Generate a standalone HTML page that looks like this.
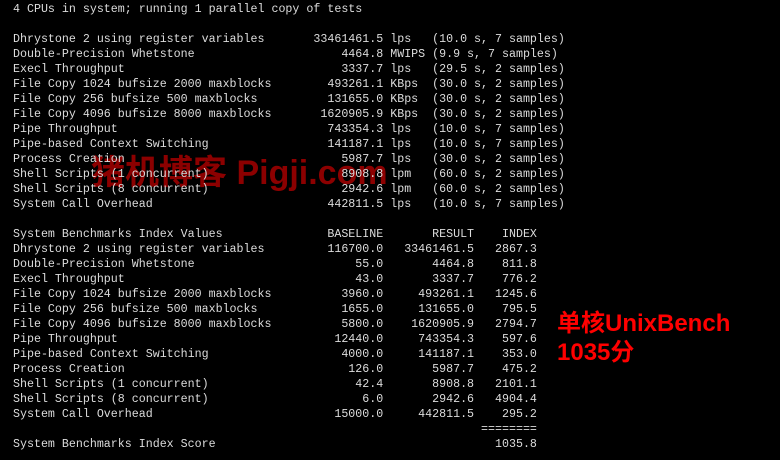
<!DOCTYPE html>
<html><head><meta charset="utf-8"><style>
html,body{margin:0;padding:0;background:#000;width:780px;height:460px;overflow:hidden;position:relative}
pre{position:absolute;left:13px;top:2px;margin:0;font-family:"Liberation Mono",monospace;font-size:11.65px;line-height:15px;color:#dcdcdc;z-index:2}
.wm{position:absolute;left:91px;top:153px;font-family:"Liberation Sans","Noto Sans CJK SC",sans-serif;font-weight:bold;font-size:34px;line-height:40px;color:#8c0000;white-space:nowrap;z-index:1}
.lbl{position:absolute;left:557px;top:309px;font-family:"Liberation Sans","Noto Sans CJK SC",sans-serif;font-weight:bold;font-size:24px;line-height:29px;color:#f00;white-space:nowrap}
</style></head><body>
<div class="wm">猪机博客 Pigji.com</div>
<pre>4 CPUs in system; running 1 parallel copy of tests

Dhrystone 2 using register variables       33461461.5 lps   (10.0 s, 7 samples)
Double-Precision Whetstone                     4464.8 MWIPS (9.9 s, 7 samples)
Execl Throughput                               3337.7 lps   (29.5 s, 2 samples)
File Copy 1024 bufsize 2000 maxblocks        493261.1 KBps  (30.0 s, 2 samples)
File Copy 256 bufsize 500 maxblocks          131655.0 KBps  (30.0 s, 2 samples)
File Copy 4096 bufsize 8000 maxblocks       1620905.9 KBps  (30.0 s, 2 samples)
Pipe Throughput                              743354.3 lps   (10.0 s, 7 samples)
Pipe-based Context Switching                 141187.1 lps   (10.0 s, 7 samples)
Process Creation                               5987.7 lps   (30.0 s, 2 samples)
Shell Scripts (1 concurrent)                   8908.8 lpm   (60.0 s, 2 samples)
Shell Scripts (8 concurrent)                   2942.6 lpm   (60.0 s, 2 samples)
System Call Overhead                         442811.5 lps   (10.0 s, 7 samples)

System Benchmarks Index Values               BASELINE       RESULT    INDEX
Dhrystone 2 using register variables         116700.0   33461461.5   2867.3
Double-Precision Whetstone                       55.0       4464.8    811.8
Execl Throughput                                 43.0       3337.7    776.2
File Copy 1024 bufsize 2000 maxblocks          3960.0     493261.1   1245.6
File Copy 256 bufsize 500 maxblocks            1655.0     131655.0    795.5
File Copy 4096 bufsize 8000 maxblocks          5800.0    1620905.9   2794.7
Pipe Throughput                               12440.0     743354.3    597.6
Pipe-based Context Switching                   4000.0     141187.1    353.0
Process Creation                                126.0       5987.7    475.2
Shell Scripts (1 concurrent)                     42.4       8908.8   2101.1
Shell Scripts (8 concurrent)                      6.0       2942.6   4904.4
System Call Overhead                          15000.0     442811.5    295.2
                                                                   ========
System Benchmarks Index Score                                        1035.8</pre>
<div class="lbl">单核UnixBench<br>1035分</div>
</body></html>
